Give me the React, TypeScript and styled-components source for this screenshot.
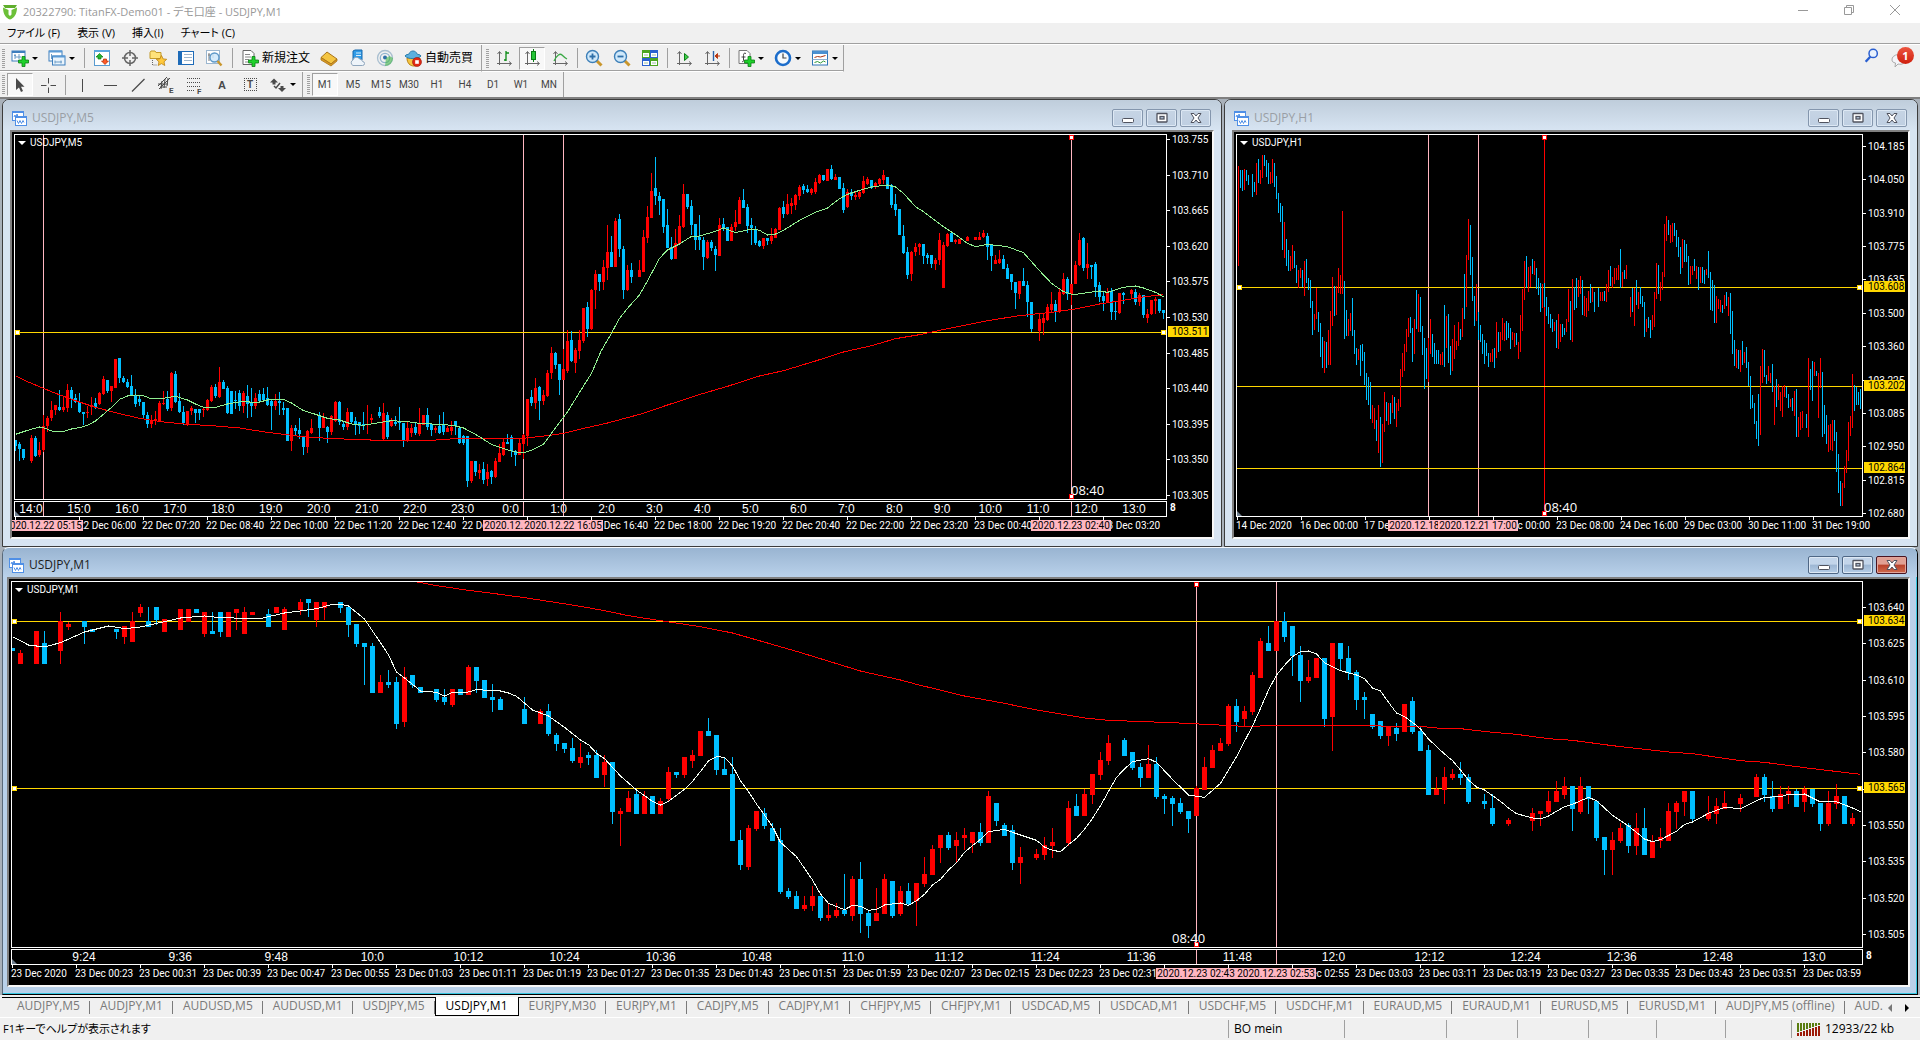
import React from "react";
import styled, { createGlobalStyle, css } from "styled-components";

/* ------------------------------------------------------------------ */
/* Tokens                                                              */
/* ------------------------------------------------------------------ */

const UI_FONT = `"Open Sans", "Noto Sans", "Noto Sans CJK JP", sans-serif`;
const AXIS_FONT = `Roboto, "Noto Sans", sans-serif`;
const UP = "#ff0000";
const DOWN = "#00bfff";
const PINK = "#ffb6c1";
const GOLD = "#ffd700";
const PLOT_STROKE = "#ffffff";

const Global = createGlobalStyle`
  *, *::before, *::after { box-sizing: border-box; }
  html, body { margin: 0; background: #f0f0f0; }
  button { font: inherit; color: inherit; margin: 0; padding: 0; border: 0; background: none; }
`;

/* ------------------------------------------------------------------ */
/* Market data. Candles: side+slot high top bottom low, in thirds of a  */
/* pixel on the price scale. Lines: slot:level.                         */
/* ------------------------------------------------------------------ */

const M1_CANDLES = `B0 323 323 333 333;R1 330 339 371 371;R3 273 273 371 371;B4 273 309 371 371;R6 216 244 333 371;R7 245 252 261 269;B9 243 243 261 311;B10 267 267 276 276;B13 267 267 276 296;R14 258 258 291 311;R15 216 243 306 306;R16 193 201 219 230;B17 201 243 261 261;B18 201 201 240 254;R19 237 237 276 276;R21 207 207 270 270;R22 207 207 246 246;B23 207 207 219 219;R24 216 216 282 290;B25 216 273 282 282;B26 216 216 276 290;R27 216 216 291 291;R28 207 207 219 270;R29 201 216 282 282;R30 216 216 225 225;B32 207 222 261 261;R33 201 201 219 219;R34 201 207 270 270;R36 178 186 210 224;B37 177 177 188 230;R38 186 186 240 260;R39 186 186 204 240;B41 186 186 204 218;B42 201 201 255 290;B43 252 252 312 320;B44 309 309 321 435;B45 309 318 459 459;R46 405 426 459 459;B47 390 426 435 444;B48 411 426 552 567;R49 381 411 546 560;B50 405 405 435 444;B51 441 441 459 459;B53 447 447 480 486;B54 447 471 486 494;R55 447 447 495 500;B56 447 447 465 465;R57 375 381 465 465;B58 381 381 423 459;B59 420 420 474 474;B60 432 471 480 516;B61 471 477 510 510;B64 471 507 552 552;R66 507 513 552 552;B67 492 513 582 587;B68 579 585 612 633;B69 609 609 627 639;B70 594 624 663 669;R71 609 651 669 684;B72 636 645 654 675;B73 630 645 714 714;R74 645 666 705 741;B75 666 666 816 852;R76 804 813 822 917;R77 753 774 816 816;B78 747 762 822 822;R79 753 768 822 822;B80 768 768 822 822;R81 774 783 822 822;R82 681 696 777 783;B83 696 696 705 713;R84 651 651 705 713;R85 630 645 663 684;R86 573 573 648 648;B87 534 573 588 588;B88 585 585 690 705;B89 651 687 705 705;B90 651 702 903 903;B91 870 900 975 990;R92 855 864 981 990;R93 813 813 867 873;B94 804 819 858 867;B95 849 864 903 903;B96 864 900 1056 1061;B97 1044 1053 1071 1077;B98 1053 1068 1107 1107;R99 1068 1095 1107 1113;R100 1038 1068 1098 1113;B101 1068 1068 1134 1142;R102 1089 1125 1134 1142;R103 1089 1110 1128 1133;B104 1002 1110 1122 1128;R105 1008 1017 1128 1142;B106 966 1017 1122 1179;B107 1110 1119 1158 1194;R108 1044 1119 1143 1143;R109 1002 1017 1122 1122;B110 1023 1023 1128 1134;R111 1038 1053 1122 1128;B112 1029 1053 1092 1097;R113 1029 1029 1083 1158;R114 951 1002 1032 1040;R115 915 927 1005 1005;R116 885 885 924 969;B117 876 885 924 930;R118 876 900 918 969;R119 864 885 894 930;R120 876 876 909 938;B121 849 876 909 917;R122 753 768 909 909;B123 789 789 843 858;B124 849 855 888 888;B125 855 870 969 990;R126 921 951 969 1032;R128 927 942 954 960;R129 891 915 945 960;R130 864 906 918 954;R132 783 804 909 917;B133 762 798 828 828;R134 747 762 828 828;R135 702 702 765 792;R136 636 660 705 720;R137 585 609 663 675;B139 594 600 648 648;B140 636 636 684 690;B141 669 681 714 741;R142 615 672 714 714;B143 651 672 771 777;B144 762 768 777 822;B145 768 774 792 858;B146 774 789 816 822;B147 813 813 837 879;R148 738 745 828 828;R149 651 681 750 750;R150 615 630 684 684;R151 594 609 633 633;R152 492 498 612 618;B153 477 498 546 576;R154 498 513 537 558;R155 396 405 516 525;R156 294 303 414 414;B157 258 309 333 333;R158 243 243 333 333;B159 216 243 291 306;B160 258 258 348 408;B161 318 345 423 486;R162 360 411 423 429;R163 354 354 414 414;B164 354 354 537 560;R165 309 309 531 633;B166 309 309 357 393;B167 318 354 399 420;B168 390 396 480 510;B169 456 471 480 537;B170 522 522 561 567;B171 543 543 588 597;R172 558 558 588 618;B173 549 564 582 602;R174 492 492 576 576;B175 471 483 576 582;B176 558 573 633 633;B177 615 630 765 765;R178 711 747 765 765;R179 681 711 750 792;R180 687 702 714 720;B181 666 702 714 735;B182 702 711 786 791;B184 762 783 792 807;B185 762 804 852 858;R187 834 840 851 858;R190 804 819 843 873;R191 813 813 822 858;R192 753 783 816 822;R193 723 753 786 786;R194 711 738 765 777;B195 738 738 807 873;R196 711 738 816 822;B197 738 738 777 822;B198 783 783 894 903;B199 891 891 930 1005;R200 876 900 930 1005;R201 849 864 903 909;B202 849 855 918 939;R203 819 864 918 945;B204 804 864 945 945;R205 885 906 954 954;R206 864 891 903 924;R207 789 813 903 903;R208 783 789 816 867;R209 753 753 786 828;B210 753 753 837 843;R212 768 819 837 843;R213 774 798 822 852;R214 753 789 807 807;R216 762 774 792 816;R218 702 711 771 771;B219 702 711 765 786;B220 723 768 807 816;R221 738 762 807 807;R222 738 753 765 792;B223 747 753 801 801;R224 738 747 786 816;B225 747 747 792 801;B226 789 789 852 873;R227 753 789 852 858;R228 732 768 792 807;B229 768 768 852 852;R230 819 834 852 858`;

const M1_FAST = `0:290 2:315 4:321 6:308 9:276 12:258 14:266 16:261 19:245 21:234 24:228 26:233 31:236 32:230 34:219 36:213 38:206 40:193 41:193 42:198 44:237 45:273 46:308 47:345 48:396 49:414 50:433 51:453 53:457 54:468 55:457 57:456 58:449 61:453 62:459 63:469 64:489 65:510 67:528 69:562 71:600 72:614 73:640 74:656 76:708 78:750 80:784 81:795 82:784 84:748 85:724 86:694 87:663 88:650 89:652 90:678 91:722 92:755 93:792 94:825 95:860 96:907 98:950 99:985 100:1020 101:1062 102:1090 104:1109 105:1096 106:1099 107:1111 108:1108 109:1095 111:1089 112:1096 113:1082 114:1063 115:1035 116:1018 117:990 118:968 119:937 120:917 121:898 122:875 124:868 125:877 127:893 128:901 129:921 130:931 131:935 132:914 133:895 134:868 135:835 136:797 138:712 139:687 140:665 142:656 143:667 145:718 147:765 149:772 151:730 153:650 155:558 156:505 157:450 158:405 159:376 160:350 161:335 162:333 163:342 164:368 166:392 168:405 169:416 170:444 171:453 172:487 173:519 174:530 175:547 176:567 177:597 179:642 180:662 181:690 182:720 183:741 184:750 186:784 187:804 188:821 190:834 191:837 192:828 194:800 195:793 197:772 198:782 200:826 202:858 203:877 204:897 205:905 206:899 208:874 209:853 210:846 212:820 214:802 216:806 218:782 219:772 221:770 222:763 224:762 226:786 228:785 230:804 231:815`;
const M1_SLOW = `50.6:126 53:137 57:151 60:160 64:173 67:184 71:199 74:212 77:227 81:242 86:260 90:279 98:334 106:393 111:420 113:433 119:468 124:490 128:510 134:534 137:541 145:548 150:554 154:559 160:556 165:558 169:556 172:559 176:559 178:564 181:566 185:577 188:583 192:596 195:601 200:617 207:636 210:641 216:662 219:667 224:683 231:703`;

const M5_EARLY = `B0 420 420 437 454;B1 426 432 447 484;B2 447 447 474 480;R4 406 414 483 489;B5 408 414 467 470;R6 426 450 465 472;R7 345 378 450 455;R8 348 354 378 395;R9 303 330 354 363;R10 315 315 330 345;B11 270 321 330 334;R12 291 321 330 336;R13 252 270 324 336;B14 261 270 297 325;B15 282 294 306 308;B16 279 306 336 338;B17 336 336 342 375;R18 318 336 340 354;R19 292 315 321 345;B20 294 309 321 327;R21 276 279 312 316;R22 228 237 282 285;B23 240 240 273 279;R24 258 258 273 306;R25 177 177 264 264;B26 174 174 234 250;B27 228 234 246 250;B28 237 246 261 264;B29 225 258 285 288;B30 267 285 312 320;B31 288 297 306 318;B32 306 306 345 357;B33 336 345 372 384;R34 345 363 372 384;R35 333 357 363 375;R36 303 309 363 363;R37 273 309 312 315;B38 273 297 327 333;R39 216 219 325 333;B40 213 222 306 310;B41 279 303 336 340;B42 318 336 369 375;R43 333 333 372 378;R44 318 324 333 345;B45 327 327 339 369;B46 327 327 339 360;R47 324 327 330 351;R48 297 300 330 333;R49 255 261 303 306;B50 252 261 288 294;R51 201 246 291 294;B52 240 246 267 268;B53 258 264 339 342;B54 273 273 342 342;B55 273 300 304 327;B56 270 279 318 333;R57 273 279 318 339;B58 255 288 312 354;B59 264 306 318 351;R60 279 294 318 327;B61 270 282 303 306;B62 264 282 300 306;B63 261 294 315 318;B64 297 303 318 390;R65 282 303 318 330;B66 276 303 309 345;B67 306 324 330 345;B68 324 324 423 423;R69 375 384 423 453;B70 375 384 392 405;B71 354 390 402 417;B72 408 408 441 465;R73 390 393 441 459;R74 357 384 399 402;B76 336 345 384 424;R77 339 351 384 384;B78 378 381 396 430;R79 345 348 396 405;R80 303 306 363 366;B81 303 306 366 375;B82 363 372 382 390;R83 324 336 381 390;B84 336 336 366 369;B85 351 363 375 405;B86 366 366 378 402;B87 336 372 378 390;R88 315 372 375 403;R89 342 355 360 372;B91 321 336 348 354;R92 309 339 417 419;B93 336 345 411 417;R94 354 363 378 381;B95 348 366 372 378;B96 321 366 369 390;B97 369 369 424 441;R98 366 384 423 426;R99 372 384 399 411;B100 366 381 399 405;R101 324 372 402 408;R102 345 345 375 375;B103 323 345 381 390;B104 372 372 390 408;R105 378 384 390 399;B106 345 378 399 403;B107 336 372 396 405;R108 378 384 396 396;R109 363 381 393 405;B110 363 363 378 405;B111 381 384 429 432;B112 405 408 430 435;B113 408 408 543 560;R114 483 483 543 549;B115 483 483 516 528;R116 492 510 519 537;B117 486 507 540 552;R118 492 516 537 558;B119 510 513 531 552;R120 474 483 531 534;R121 432 459 486 486;R122 417 426 465 468;B123 402 426 432 432;B124 405 411 453 470;B125 450 453 465 498;R126 417 429 465 465;R127 402 405 432 477;R128 297 297 408 438;B129 270 291 309 318;R130 234 264 309 327;B131 258 261 303 360;R132 270 285 303 315;R133 210 219 288 291;R134 141 159 219 237;B135 156 159 195 207;B136 192 192 240 285;R137 147 207 240 240;R138 90 123 213 218;B139 93 120 183 186;R140 144 150 189 219;R141 90 120 153 177`;

const M5_LATE = `R142 534 534 633 640;B143 515 531 597 621;R144 477 480 597 600;R145 420 432 480 537;B146 432 432 456 482;R147 390 411 456 480;R148 285 366 414 450;B149 318 366 411 411;R150 264 273 411 411;B151 252 267 357 380;B152 348 357 480 507;R153 405 420 480 483;B154 399 420 441 459;R156 390 420 441 441;R157 300 321 426 426;R158 228 261 324 339;R159 129 183 263 264;B160 81 174 198 225;B161 186 198 213 255;B162 207 207 291 309;B163 237 285 354 354;B164 321 351 387 390;R165 297 339 387 387;R166 255 288 342 345;R167 162 192 291 294;B168 192 192 231 237;B169 210 228 285 315;B170 282 282 330 360;B171 255 321 330 360;B172 321 330 381 420;R173 330 336 384 387;B174 330 336 354 363;B175 348 357 375 423;R176 264 285 378 378;B177 264 282 297 303;B178 291 291 333 333;R179 282 291 333 333;R180 240 276 291 303;R181 201 210 282 282;B182 177 210 234 234;B183 222 231 288 309;B184 264 285 294 345;B185 288 297 339 345;B186 330 333 348 351;R187 324 324 348 357;B188 324 324 333 345;R189 294 318 333 342;R190 294 297 324 324;R191 231 234 300 300;B192 213 231 252 264;R193 192 222 252 255;R194 204 219 228 252;R195 192 195 225 240;R196 165 171 198 210;B197 162 168 180 192;B198 165 177 186 189;R199 174 177 189 195;R200 144 156 186 192;R201 132 135 159 162;B202 135 135 150 153;R203 117 117 153 153;B204 105 117 147 150;R205 132 141 150 150;B206 141 141 177 177;B207 159 174 240 249;R208 177 186 231 234;B209 177 186 198 210;R210 186 195 201 210;R211 180 186 201 207;R212 138 153 189 192;R213 141 147 162 165;B214 150 150 174 177;R215 156 159 171 177;R216 144 147 162 165;R217 120 135 150 162;B218 141 141 177 177;B219 162 165 225 234;B220 192 222 240 258;B221 237 237 315 315;B222 285 318 369 372;B223 351 366 435 447;R224 363 366 432 453;R225 339 351 366 378;R226 339 342 351 375;B227 342 342 378 402;B228 369 375 384 402;B229 375 375 402 414;R230 384 390 402 420;R231 309 330 390 405;R232 336 345 474 474;R233 309 312 348 351;B234 309 309 336 336;R235 327 330 336 342;R236 327 327 342 342;R238 318 321 333 333;R240 321 322 330 330;R241 306 321 330 330;R242 300 309 321 324;B243 309 318 351 390;B244 345 345 378 423;R245 375 390 402 402;R246 360 387 399 402;B247 375 387 417 417;B248 402 414 447 447;B249 432 432 456 480;B250 456 456 489 537;R251 453 453 492 507;B252 414 453 468 468;B253 453 465 516 561;B254 516 516 597 606;R256 552 567 603 633;R257 549 564 579 615;R258 522 531 570 573;R259 486 522 540 549;B260 510 522 543 576;R261 477 486 543 549;R262 429 447 492 495;B263 441 447 492 510;R264 462 462 492 525;R265 393 405 462 462;R266 309 330 405 408;B267 321 324 414 423;R268 339 402 414 447;B269 405 405 411 447;B270 396 402 471 501;B271 456 465 501 516;B272 486 498 513 543;R273 474 486 516 519;B274 474 483 546 570;B275 516 543 546 570;R276 489 489 549 552;B277 486 489 495 522;R279 477 480 492 507;B280 477 486 516 525;R281 489 495 516 528;B282 495 495 555 564;R283 537 552 564 579;R284 510 510 552 555;R285 501 507 513 552;B286 507 507 543 549;B287 540 540 549 567`;

const M5_FAST = `0:913 3:901 6:891 7:893 9:903 12:904 14:897 16:893 18:886 20:873 22:853 24:832 26:808 28:798 30:795 32:797 34:807 37:805 40:799 43:810 45:822 47:832 50:832 53:822 56:816 58:815 60:819 63:810 67:808 69:819 72:842 75:853 78:865 81:870 84:882 87:886 90:880 94:872 98:875 101:880 104:882 107:883 110:888 112:894 115:913 119:943 122:956 125:966 127:968 129:961 132:943 134:910 137:862 138:846 141:787 144:730 146.4:663 148.5:620 151:565 153:535 156:495 158:453 161:385 163:360 166:342 169:319 171:318 175:304 177:294 180:308 184:297 186:301 188:315 190:312 192:301 196:271 200:247 203:234 206:206 208:193 211:181 214:171 218:165 220:171 222:190 225:230 227:245 232:290 235:314 238:340 240:350 243:343 248:350 252:368 254:395 256:422 259:460 262:485 264.5:494 268:488 271:483 273:487 277:472 280:468 282:474 285:487 287:500`;
const M5_SLOW = `0:737 3:755 9:785 14:808 20:832 25:848 31:865 37:876 43:883 49:887 56:894 63:907 71:919 78:925 86:929 94:932 104:931 111:925 127:925 133:917 137:910 141:898 148:879 157:850 163:825 172:790 178:769 186:738 192:722 200:693 207:666 214:647 220:626 226:614 233:596 243:572 251:557 259:547 265:537 271:522 277:511 283:499 287:494`;

/* Hourly bars, one entry per slot: side+high low, "-" is an empty slot. */
const H1_BARS = `R474 648;R213 513;B225 280;B225 288;R222 284;B225 258;B240 270;-;B237 306;B261 290;R204 300;B192 264;R225 266;R180 249;B180 213;B195 246;B204 267;R231 266;R192 264;B204 276;B243 312;B294 354;B324 381;B333 465;R381 489;B432 513;B465 528;R483 528;R450 522;B468 519;B510 564;R525 580;R519 549;B525 576;R498 603;B492 564;B549 585;B555 640;B618 720;R657 705;R579 672;B651 711;B684 786;B726 819;R738 834;B741 819;R705 810;R648 810;R546 693;B573 663;R573 660;R519 594;R540 597;R348 597;B558 732;B645 723;R672 723;R654 708;B609 723;B705 777;B759 810;R762 795;B750 843;B747 798;B771 870;B834 915;B846 930;B861 972;R930 984;R939 1002;B975 1038;R930 1074;B966 1116;R987 1104;R891 1011;B921 978;R924 990;B924 987;R900 954;B906 972;R924 996;R912 948;R822 936;R774 846;R747 828;R702 771;R669 726;B666 714;B699 801;R672 777;B585 702;R597 711;B606 711;B693 780;B729 882;B759 852;R729 862;R672 777;B717 787;B744 807;B765 807;B765 807;R777 810;R771 810;B630 816;R663 759;B657 804;B753 840;R732 828;R690 792;R738 765;R681 753;B702 735;R639 726;B537 672;R480 636;R372 495;B390 540;B486 618;B603 693;R567 678;B651 735;B690 741;B717 778;B735 807;B744 784;B774 816;R774 801;R762 801;B759 819;R681 789;B711 771;R711 768;R669 735;R684 738;B678 735;B684 729;B699 762;R711 735;R714 756;B714 750;R741 792;R660 771;R582 708;R498 615;B483 579;R516 591;R513 576;B492 537;R498 540;B519 582;B549 600;B564 651;R567 640;B564 636;B606 663;B636 687;B657 699;B672 711;R681 708;B675 759;R657 762;R687 741;B687 726;B699 720;R672 711;R582 681;B618 735;R552 741;B576 645;B549 639;R555 606;R543 597;B555 660;R603 664;R609 666;R588 648;B567 624;R579 620;B591 651;-;B579 636;R591 618;R591 618;B588 618;R567 621;R526 591;B513 573;R546 579;R519 567;R519 555;R510 555;B462 579;R531 576;B525 552;R510 552;-;R606 666;B579 651;R579 693;B555 630;R591 642;B576 627;B603 636;B621 726;R672 711;B666 699;B675 729;R660 705;R591 696;R504 612;B510 597;R561 618;R531 585;R387 546;R363 438;B375 420;R390 444;R384 441;B384 423;B405 456;B426 486;B456 537;R432 519;B435 501;B447 501;B483 570;R513 567;R513 540;B492 528;R513 552;B516 585;R516 564;B516 564;B525 567;R522 540;B468 549;B531 645;B555 648;B570 684;R603 684;R612 642;R615 651;B630 654;R600 642;B591 633;R606 663;B594 717;B648 777;B735 813;R762 819;B765 822;R765 831;B738 810;R771 804;B756 819;B801 873;B843 942;B900 939;B924 987;B978 1032;B897 1053;R813 1020;R762 864;B765 846;B840 867;R813 858;R834 864;B807 891;R873 990;B852 936;R867 915;R891 948;R873 966;R870 906;B876 909;B897 939;R912 936;B909 948;R888 963;B882 1026;R966 1026;R951 1006;R948 999;-;B957 999;R789 1026;B822 885;B798 918;R801 843;B828 843;R833 969;R789 879;B831 1026;B930 1017;B960 1047;R990 1071;R987 1065;R975 1068;B975 1038;B1011 1131;B1077 1194;B1158 1233;R1164 1233;R1113 1179;R1065 1134;R981 1098;R963 1023;R837 999;B870 948;B876 930;B891 930;B882 942`;

/* ------------------------------------------------------------------ */
/* Chart drawing                                                       */
/* ------------------------------------------------------------------ */

interface SeriesProps {
  data: string;
  pitch: number;
  body: number;
  shift: number;
}

const level = (v: number, shift: number) => Math.round(v / 3) + shift;

function Candles({ data, pitch, body, shift }: SeriesProps) {
  return (
    <>
      {data.split(";").map((row) => {
        const [head, ...rest] = row.split(" ");
        const [high, top, bottom, low] = rest.map((n) => level(Number(n), shift));
        const x = Number(head.slice(1)) * pitch;
        const fill = head[0] === "R" ? UP : DOWN;
        return (
          <g key={head} fill={fill}>
            <rect x={x} y={high} width={1} height={Math.max(1, low - high)} />
            <rect x={x - (body - 1) / 2} y={top} width={body} height={Math.max(1, bottom - top)} />
          </g>
        );
      })}
    </>
  );
}

function Bars({ data, shift }: { data: string; shift: number }) {
  return (
    <>
      {data.split(";").map((row, slot) => {
        if (row === "-") return null;
        const [high, low] = row.slice(1).split(" ").map((n) => level(Number(n), shift));
        return <rect key={slot} x={slot * 2 - 1} y={high} width={1} height={low - high} fill={row[0] === "R" ? UP : DOWN} />;
      })}
    </>
  );
}

function Average({ data, pitch, shift, color }: { data: string; pitch: number; shift: number; color: string }) {
  const points = data
    .split(" ")
    .map((p) => p.split(":").map(Number))
    .map(([s, v]) => `${s * pitch + 0.5},${v / 3 + shift}`)
    .join(" ");
  return <polyline points={points} fill="none" stroke={color} strokeWidth={1} />;
}

interface Marker {
  x: number;
  color?: string;
  label?: string;
  handles?: boolean;
}

interface PriceLine {
  y: number;
  price: string;
  handles?: boolean;
}

interface ChartSpec {
  name: string;
  width: number;
  height: number;
  axisTop: number;
  axisBottom: number;
  prices: string[];
  dates: string[];
  hours?: string[];
  hoursLead?: number;
  hoursTrail?: number;
  lines: PriceLine[];
  markers: Marker[];
  clockX: number;
  series: React.ReactNode;
}

const Body = styled.div<{ $strip: boolean }>`
  flex: 1;
  min-height: 0;
  display: grid;
  grid-template-columns: minmax(0, 1fr) 45px;
  grid-template-rows: minmax(0, 1fr) ${(p) => (p.$strip ? "17px" : "")} 20px;
  padding: 2px 0 0 2px;
  overflow: hidden;
  background: #000;
  color: #fff;
  font: 10px/11px ${AXIS_FONT};
  white-space: nowrap;
`;

const Plot = styled.div`
  grid-column: 1;
  position: relative;
  min-height: 0;
  border: 1px solid ${PLOT_STROKE};
`;

const Drawing = styled.svg`
  display: block;
  width: 100%;
  height: 100%;
  shape-rendering: crispEdges;
`;

const ChartName = styled.div`
  position: absolute;
  top: 2px;
  left: 3px;
  display: flex;
  align-items: center;
  gap: 4px;
  height: 11px;

  &::before {
    content: "";
    border: 4px solid transparent;
    border-top-color: #fff;
    border-bottom-width: 0;
  }
`;

const Clock = styled.div`
  position: absolute;
  bottom: 2px;
  font: 13px/14px ${UI_FONT};
`;

const Strip = styled.div<{ $lead: number; $count: number }>`
  grid-column: 1;
  position: relative;
  display: grid;
  grid-template-columns: repeat(${(p) => p.$count}, minmax(0, 1fr));
  margin-top: 1px;
  padding-left: ${(p) => p.$lead}px;
  border: 1px solid ${PLOT_STROKE};
`;

const Hour = styled.span<{ $trail: number }>`
  padding-right: ${(p) => p.$trail}px;
  text-align: center;
  font: 12px/14px "Liberation Sans", Arial, sans-serif;
`;

const StripMark = styled.i`
  position: absolute;
  top: 0;
  bottom: 0;
  width: 1px;
  background: ${PINK};
`;

const Corner = styled.i`
  position: absolute;
  left: 0;
  bottom: 0;
  border-top: 5px solid transparent;
  border-left: 5px solid #708090;
`;

const Dates = styled.div`
  grid-column: 1;
  position: relative;
  display: flex;
`;

const DateLabel = styled.span`
  position: relative;
  flex: none;
  padding-top: 3px;

  &::before {
    content: "";
    position: absolute;
    top: 0;
    left: 1px;
    width: 1px;
    height: 3px;
    background: #fff;
  }
`;

const DateBadge = styled.span`
  position: absolute;
  top: 3px;
  width: 80px;
  margin-left: -40px;
  text-align: center;
  color: #000;
  background: ${PINK};
`;

const Prices = styled.div<{ $top: number; $bottom: number }>`
  grid-column: 2;
  grid-row: 1 / -1;
  position: relative;
  display: flex;
  flex-direction: column;
  justify-content: space-between;
  padding: ${(p) => p.$top}px 0 ${(p) => p.$bottom}px;
`;

const Price = styled.span`
  display: flex;
  align-items: center;
  gap: 2px;

  &::before {
    content: "";
    width: 3px;
    height: 1px;
    background: #fff;
  }
`;

const PriceBadge = styled.span`
  position: absolute;
  left: 1px;
  width: 41px;
  padding-left: 4px;
  margin-top: -6px;
  color: #000;
  background: ${GOLD};
`;

const StripScale = styled.span`
  position: absolute;
  left: 3px;
  bottom: 24px;
  font-weight: 700;
`;

function Handle({ x, y, color }: { x: number; y: number; color: string }) {
  return <rect x={x + 0.5} y={y + 0.5} width={4} height={4} fill="#fff" stroke={color} strokeWidth={1} />;
}

function Chart({ spec }: { spec: ChartSpec }) {
  const { width: w, height: h } = spec;
  const axisHeight = spec.height + 2 + (spec.hours ? 17 : 0) + 20;
  return (
    <Body $strip={Boolean(spec.hours)}>
      <Plot>
        <Drawing viewBox={`0 0 ${w} ${h}`} preserveAspectRatio="none" role="img" aria-label={spec.name}>
          {spec.markers.map((m) => (
            <rect key={m.x} x={m.x} y={0} width={1} height={h} fill={m.color ?? PINK} />
          ))}
          {spec.lines.map((l) => (
            <rect key={l.y} x={0} y={l.y} width={w} height={1} fill={GOLD} />
          ))}
          {spec.series}
          {spec.lines
            .filter((l) => l.handles)
            .map((l) => (
              <g key={l.y}>
                <Handle x={0} y={l.y - 2} color={GOLD} />
                <Handle x={w - 5} y={l.y - 2} color={GOLD} />
              </g>
            ))}
          {spec.markers
            .filter((m) => m.handles)
            .map((m) => (
              <g key={m.x}>
                <Handle x={m.x - 2} y={0} color={UP} />
                <Handle x={m.x - 2} y={h - 5} color={UP} />
              </g>
            ))}
        </Drawing>
        <ChartName>{spec.name}</ChartName>
        <Clock style={{ left: `${(spec.clockX / w) * 100}%` }}>08:40</Clock>
        {!spec.hours && <Corner />}
      </Plot>
      {spec.hours && (
        <Strip $lead={spec.hoursLead ?? 0} $count={spec.hours.length}>
          {spec.hours.map((t) => (
            <Hour key={t} $trail={spec.hoursTrail ?? 0}>
              {t}
            </Hour>
          ))}
          {spec.markers.map((m) => (
            <StripMark key={m.x} style={{ left: `${(m.x / w) * 100}%` }} />
          ))}
          <Corner />
        </Strip>
      )}
      <Dates>
        {spec.dates.map((d, i) => (
          <DateLabel key={i} style={{ width: `${(64 / (w + 2)) * 100}%` }}>
            {d}
          </DateLabel>
        ))}
        {spec.markers
          .filter((m) => m.label)
          .map((m) => (
            <DateBadge key={m.x} style={{ left: `${((m.x + 1) / (w + 2)) * 100}%` }}>
              {m.label}
            </DateBadge>
          ))}
      </Dates>
      <Prices $top={spec.axisTop} $bottom={spec.axisBottom}>
        {spec.prices.map((p) => (
          <Price key={p}>{p}</Price>
        ))}
        {spec.lines.map((l) => (
          <PriceBadge key={l.price} style={{ top: `${((l.y + 1) / axisHeight) * 100}%` }}>
            {l.price}
          </PriceBadge>
        ))}
        {spec.hours && <StripScale>8</StripScale>}
      </Prices>
    </Body>
  );
}

/* ------------------------------------------------------------------ */
/* Chart definitions                                                   */
/* ------------------------------------------------------------------ */

const m5Spec: ChartSpec = {
  name: "USDJPY,M5",
  width: 1151,
  height: 364,
  axisTop: 0,
  axisBottom: 36,
  prices: ["103.755", "103.710", "103.665", "103.620", "103.575", "103.530", "103.485", "103.440", "103.395", "103.350", "103.305"],
  dates: [
    "22 Dec 2020", "22 Dec 06:00", "22 Dec 07:20", "22 Dec 08:40", "22 Dec 10:00", "22 Dec 11:20",
    "22 Dec 12:40", "22 Dec 14:00", "22 Dec 15:20", "22 Dec 16:40", "22 Dec 18:00", "22 Dec 19:20",
    "22 Dec 20:40", "22 Dec 22:00", "22 Dec 23:20", "23 Dec 00:40", "23 Dec 02:00", "23 Dec 03:20",
  ],
  hours: Array.from({ length: 24 }, (_, i) => `${(14 + i) % 24}:0`),
  hoursTrail: 16,
  lines: [{ y: 197, price: "103.511", handles: true }],
  markers: [
    { x: 28, label: "2020.12.22 05:15" },
    { x: 508, label: "2020.12.22 14:45" },
    { x: 548, label: "2020.12.22 16:05" },
    { x: 1056, label: "2020.12.23 02:40", handles: true },
  ],
  clockX: 1056,
  series: (
    <>
      <Candles data={M5_EARLY} pitch={4} body={3} shift={165} />
      <Candles data={M5_LATE} pitch={4} body={3} shift={-5} />
      <Average data={M5_SLOW} pitch={4} shift={-5} color={UP} />
      <Average data={M5_FAST} pitch={4} shift={-5} color="#90ee90" />
    </>
  ),
};

const h1Spec: ChartSpec = {
  name: "USDJPY,H1",
  width: 625,
  height: 381,
  axisTop: 7,
  axisBottom: 18,
  prices: ["104.185", "104.050", "103.910", "103.775", "103.635", "103.500", "103.360", "103.225", "103.085", "102.950", "102.815", "102.680"],
  dates: [
    "14 Dec 2020", "16 Dec 00:00", "17 Dec 08:00", "18 Dec 16:00", "22 Dec 00:00",
    "23 Dec 08:00", "24 Dec 16:00", "29 Dec 03:00", "30 Dec 11:00", "31 Dec 19:00",
  ],
  lines: [
    { y: 152, price: "103.608", handles: true },
    { y: 251, price: "103.202" },
    { y: 333, price: "102.864" },
  ],
  markers: [
    { x: 191, label: "2020.12.18 16:00" },
    { x: 241, label: "2020.12.21 17:00" },
    { x: 307, color: UP, handles: true },
  ],
  clockX: 307,
  series: <Bars data={H1_BARS} shift={-40} />,
};

const m1Dates = Array.from({ length: 29 }, (_, i) => {
  if (i === 0) return "23 Dec 2020";
  const minutes = 15 + i * 8;
  return `23 Dec 0${Math.floor(minutes / 60)}:${String(minutes % 60).padStart(2, "0")}`;
});

const m1Hours = Array.from({ length: 19 }, (_, i) => {
  const minutes = 9 * 60 + 24 + i * 12;
  return `${Math.floor(minutes / 60)}:${minutes % 60}`;
});

const m1Spec: ChartSpec = {
  name: "USDJPY,M1",
  width: 1850,
  height: 365,
  axisTop: 21,
  axisBottom: 45,
  prices: ["103.640", "103.625", "103.610", "103.595", "103.580", "103.565", "103.550", "103.535", "103.520", "103.505"],
  dates: m1Dates,
  hours: m1Hours,
  hoursLead: 24,
  lines: [
    { y: 39, price: "103.634", handles: true },
    { y: 206, price: "103.565", handles: true },
  ],
  markers: [
    { x: 1184, label: "2020.12.23 02:43", handles: true },
    { x: 1264, label: "2020.12.23 02:53" },
  ],
  clockX: 1160,
  series: (
    <>
      <Candles data={M1_CANDLES} pitch={8} body={5} shift={-42} />
      <Average data={M1_SLOW} pitch={8} shift={-42} color={UP} />
      <Average data={M1_FAST} pitch={8} shift={-42} color="#f5fff5" />
    </>
  ),
};

/* ------------------------------------------------------------------ */
/* MDI windows                                                         */
/* ------------------------------------------------------------------ */

const Workspace = styled.main`
  flex: 1;
  min-height: 0;
  display: grid;
  grid-template-columns: minmax(0, 1220fr) minmax(0, 694fr);
  grid-template-rows: repeat(2, minmax(0, 1fr));
  column-gap: 2px;
  padding: 0 2px;
  border-top: 2px solid #808080;
  background: #a9b1ba;
`;

const Window = styled.section<{ $active?: boolean }>`
  display: flex;
  flex-direction: column;
  min-width: 0;
  min-height: 0;
  border: 1px solid #3c3c3c;
  border-radius: 7px 7px 0 0;
  background: #d7e4f2;

  ${(p) =>
    p.$active &&
    css`
      grid-column: 1 / -1;
      border-color: #f4f8fc #000 #000 #5a6a7a;
      background: #b9d1ea;
      box-shadow: inset -1px -1px 0 #35c6e0;
    `}
`;

const TitleBar = styled.header<{ $active?: boolean }>`
  display: flex;
  align-items: center;
  flex: none;
  gap: 5px;
  height: ${(p) => (p.$active ? 29 : 30)}px;
  padding: ${(p) => (p.$active ? 5 : 6)}px 8px 0 ${(p) => (p.$active ? 6 : 9)}px;
  border-radius: 6px 6px 0 0;
  color: ${(p) => (p.$active ? "#1c1c1c" : "#9a9fa5")};
  background: ${(p) => (p.$active ? "linear-gradient(#99b4d1, #b9d1ea)" : "linear-gradient(#bfcddb, #d7e4f2)")};
  font: 12px/16px ${UI_FONT};
`;

const WindowName = styled.span`
  flex: 1;
`;

const Client = styled.div<{ $active?: boolean }>`
  flex: 1;
  min-height: 0;
  display: flex;
  flex-direction: column;
  margin: 0 7px 7px ${(p) => (p.$active ? 4 : 7)}px;
  border: 2px solid;
  border-color: #808080 #f8f8f8 #f8f8f8 #808080;
`;

const Caption = styled.div`
  display: flex;
  gap: 3px;
  padding-right: 2px;
`;

const CaptionButton = styled.button<{ $tone: "idle" | "active" | "close" }>`
  display: grid;
  place-items: center;
  width: 31px;
  height: 18px;
  border: 1px solid ${(p) => (p.$tone === "close" ? "#4a1420" : p.$tone === "active" ? "#4f6785" : "#8496ad")};
  border-radius: 2px;
  box-shadow: inset 0 0 0 1px ${(p) => (p.$tone === "close" ? "#e2a59b" : "#dde8f4")};
  background: ${(p) =>
    p.$tone === "close"
      ? "linear-gradient(#e0a094 45%, #b8412b 50%, #cf6b4d)"
      : p.$tone === "active"
        ? "linear-gradient(#c3d5ea 45%, #9db6d3 50%, #b5cde6)"
        : "linear-gradient(#c6d4e4, #bfcfe2)"};
`;

const ChartIcon = () => (
  <svg width="15" height="15" viewBox="0 0 15 15" aria-hidden="true">
    <rect x="0.5" y="0.5" width="11" height="9" fill="#fff" stroke="#4f8fe6" />
    <path d="M0 1.5h12" stroke="#4f8fe6" />
    <path d="M2 6l1-2 1 3 1-4 1 3" fill="none" stroke="#4f8fe6" />
    <rect x="3.5" y="5.500" width="11" height="9" fill="#fff" stroke="#4f8fe6" />
    <path d="M3 6.500h12" stroke="#4f8fe6" />
    <path d="M5 9.500l1.500 3 1.500-3 1.500 3 1.500-3 1 2" fill="none" stroke="#4f8fe6" />
  </svg>
);

const MinGlyph = () => (
  <svg width="12" height="12" viewBox="0 0 12 12" aria-hidden="true">
    <rect x="0.5" y="6.500" width="11" height="4" rx="1" fill="#fff" stroke="#50535f" />
  </svg>
);
const MaxGlyph = () => (
  <svg width="12" height="12" viewBox="0 0 12 12" aria-hidden="true">
    <rect x="1" y="1.500" width="10" height="8.500" rx="0.500" fill="#fff" stroke="#50535f" strokeWidth="1.300" />
    <rect x="4" y="4.500" width="4" height="2.500" fill="#b8cbe0" stroke="#50535f" strokeWidth="1.300" />
  </svg>
);
const CloseGlyph = () => (
  <svg width="12" height="12" viewBox="0 0 12 12" aria-hidden="true">
    <path d="M1 1.500h3l2 2.500 2-2.500h3L8 6l3 4.500H8L6 8l-2 2.500H1L4 6z" fill="#fff" stroke="#50535f" />
  </svg>
);

function ChartWindow({ spec, active }: { spec: ChartSpec; active?: boolean }) {
  const tone = active ? "active" : "idle";
  return (
    <Window $active={active} aria-label={spec.name}>
      <TitleBar $active={active}>
        <ChartIcon />
        <WindowName>{spec.name}</WindowName>
        <Caption>
          <CaptionButton $tone={tone} aria-label="Minimize">
            <MinGlyph />
          </CaptionButton>
          <CaptionButton $tone={tone} aria-label="Maximize">
            <MaxGlyph />
          </CaptionButton>
          <CaptionButton $tone={active ? "close" : "idle"} aria-label="Close">
            <CloseGlyph />
          </CaptionButton>
        </Caption>
      </TitleBar>
      <Client $active={active}>
        <Chart spec={spec} />
      </Client>
    </Window>
  );
}

/* ------------------------------------------------------------------ */
/* Title bar and menu                                                  */
/* ------------------------------------------------------------------ */

const Page = styled.div`
  display: flex;
  flex-direction: column;
  height: 100vh;
  min-height: 640px;
  background: #f0f0f0;
  color: #000;
  font: 12px/16px ${UI_FONT};
  font-feature-settings: "palt";
  white-space: nowrap;
  overflow: hidden;
`;

const AppBar = styled.header`
  display: flex;
  align-items: center;
  flex: none;
  gap: 5px;
  height: 23px;
  padding-left: 2px;
  background: #fff;
  color: #999;
  font-size: 11px;
`;

const AppName = styled.span`
  flex: 1;
`;

const SystemButton = styled.button`
  display: grid;
  place-items: center;
  width: 46px;
  height: 20px;
  margin-bottom: 3px;
`;

const SystemButtons = styled.div`
  display: flex;
  padding-right: 2px;
`;

const MenuBar = styled.nav`
  display: flex;
  flex: none;
  align-items: flex-start;
  gap: 17px;
  height: 22px;
  padding: 2px 7px 0;
  border-bottom: 1px solid #fff;
  box-shadow: inset 0 -1px 0 #a0a0a0;
  font-size: 11px;
`;

/* ------------------------------------------------------------------ */
/* Toolbars                                                            */
/* ------------------------------------------------------------------ */

const ToolRow = styled.div`
  display: flex;
  flex: none;
`;

const ToolBar = styled.div<{ $height: number; $ruled?: boolean; $lead?: number; $trail?: number }>`
  display: flex;
  align-items: center;
  height: ${(p) => p.$height}px;
  padding: 0 ${(p) => p.$trail ?? 0}px 0 ${(p) => p.$lead ?? 0}px;
  border-right: 1px solid #a0a0a0;
  ${(p) =>
    p.$ruled &&
    css`
      border-bottom: 1px solid #fff;
      box-shadow: inset 0 -1px 0 #a0a0a0;
    `}
`;

const Grip = styled.i`
  width: 3px;
  height: 19px;
  margin: 0 1px 0 2px;
  background: repeating-linear-gradient(#a0a0a0 0 1px, #f0f0f0 1px 2px);
`;

const Divider = styled.i<{ $roomy?: boolean }>`
  width: 1px;
  height: 20px;
  margin: 0 ${(p) => (p.$roomy ? 3 : 2)}px 0 ${(p) => (p.$roomy ? 4 : 3)}px;
  background: #a0a0a0;
`;

const ToolButton = styled.button<{ $pressed?: boolean; $wide?: boolean }>`
  display: flex;
  align-items: center;
  justify-content: ${(p) => (p.$wide ? "flex-start" : "center")};
  gap: 3px;
  min-width: ${(p) => (p.$wide ? 37 : 28)}px;
  height: 23px;
  padding: 0 ${(p) => (p.$wide ? 5 : 0)}px;
  ${(p) =>
    p.$pressed &&
    css`
      min-width: 26px;
      margin: 0 1px;
      border: 1px solid;
      border-color: #a0a0a0 #fff #fff #a0a0a0;
      background: #f8f8f8;
    `}
`;

const Caret = styled.i`
  border: 3px solid transparent;
  border-top-color: #000;
  border-bottom-width: 0;
`;

const Period = styled(ToolButton)`
  color: #444;
  font: 10px/12px ${AXIS_FONT};
`;

const Spacer = styled.div`
  flex: 1;
`;

const Notices = styled.div`
  display: flex;
  align-items: center;
  gap: 11px;
  height: 25px;
  padding-right: 6px;
`;

const Icon = ({ children, size = 18 }: { children: React.ReactNode; size?: number }) => (
  <svg width={size} height={size} viewBox="0 0 18 18" fill="none" aria-hidden="true">
    {children}
  </svg>
);

const Plus = () => <path d="M11 7.500h3v3.500h3.500v3H14v3.500h-3V14H7.500v-3H11z" fill="#1fd12b" stroke="#0b7d14" strokeWidth="0.800" />;
const Axes = () => (
  <>
    <path d="M4.500 3v13M2 14.500h14" stroke="#666" />
    <path d="M2.500 5l2-2.500 2 2.500M14 12.500l2.500 2-2.500 2" stroke="#666" />
  </>
);

const NewChart = () => (
  <Icon>
    <rect x="1" y="2" width="13" height="10" fill="#fff" stroke="#3d7ebd" />
    <path d="M1 3h13" stroke="#3d7ebd" strokeWidth="2" />
    <path d="M4 5v5M3 6.500h2M4 8h6M8 5v5" stroke="#6b9bc6" />
    <Plus />
  </Icon>
);
const Profiles = () => (
  <Icon>
    <rect x="1" y="2" width="13" height="10" fill="#fff" stroke="#3d7ebd" />
    <path d="M1 2.500h13" stroke="#5b9bd5" strokeWidth="2" />
    <path d="M3.500 5v5M3 8h6" stroke="#6b9bc6" />
    <rect x="4.500" y="7" width="12.500" height="9" fill="#eaf4fc" stroke="#3d7ebd" />
    <path d="M4.500 7.500h12.500" stroke="#5b9bd5" strokeWidth="2" />
    <path d="M7 13h7M7 11.500v3M13 11.500v3" stroke="#6b9bc6" />
  </Icon>
);
const MarketWatch = () => (
  <Icon>
    <rect x="1.500" y="1.500" width="15" height="15" fill="#fff" stroke="#5a9bd0" />
    <path d="M1.500 2h15" stroke="#5aa7e0" strokeWidth="2" />
    <path d="M6.500 4.500l3.500 3.500H8v2H5V8H3z" fill="#24b52d" stroke="#0b7d14" strokeWidth="0.700" />
    <path d="M12 15.500L8.500 12h2v-2h3v2h2z" fill="#ff5a28" stroke="#b32a00" strokeWidth="0.700" />
  </Icon>
);
const DataWindow = () => (
  <Icon>
    <circle cx="9" cy="9" r="5.500" stroke="#666" strokeWidth="1.500" />
    <path d="M9 1v6M9 11v6M1 9h6M11 9h6" stroke="#666" strokeWidth="1.500" />
  </Icon>
);
const Navigator = () => (
  <Icon>
    <path d="M1 3.500l1-1.500h4l1 1.500h5v6H1z" fill="#ffe27a" stroke="#c39a2a" />
    <path d="M3.500 11v5h4" stroke="#666" strokeDasharray="1 1" />
    <path d="M12.500 6.500l1.600 3.400 3.600.4-2.700 2.500.8 3.700-3.300-1.900-3.300 1.900.8-3.700-2.700-2.500 3.600-.4z" fill="#ffc93c" stroke="#b98010" strokeWidth="0.800" />
  </Icon>
);
const Terminal = () => (
  <Icon>
    <rect x="1.500" y="2.500" width="15" height="13" fill="#fff" stroke="#1e6bb8" />
    <path d="M3.500 2.500v13" stroke="#1e6bb8" strokeWidth="3" />
    <path d="M7 5.500h8M7 8.500h8M7 11.500h8" stroke="#9fb6cc" />
  </Icon>
);
const Tester = () => (
  <Icon>
    <rect x="1.500" y="1.500" width="13" height="13" fill="#fff" stroke="#9bb6cf" />
    <path d="M4 4v8M8 4v5M3 6h2" stroke="#777" />
    <circle cx="9.500" cy="8.500" r="4.500" fill="#cfe8fa" fillOpacity="0.850" stroke="#5d98c8" strokeWidth="1.400" />
    <path d="M12.500 12l4 4.500" stroke="#c9962c" strokeWidth="2.400" />
  </Icon>
);
const NewOrder = () => (
  <Icon>
    <path d="M2 1.500h8l3 3v11H2z" fill="#fff" stroke="#666" />
    <path d="M4 5.500h5M4 8h6M4 10.500h4M4 13h3" stroke="#888" />
    <Plus />
  </Icon>
);
const Editor = () => (
  <Icon>
    <path d="M1 8.500L7 3l10 7-6 5z" fill="#f4c542" stroke="#a8741a" />
    <path d="M1 8.500V11l10 6 6-5v-2l-6 5z" fill="#d99a20" stroke="#a8741a" strokeWidth="0.800" />
  </Icon>
);
const Cloud = () => (
  <Icon>
    <path d="M5 2l2-1h7v10H5z" fill="#2f9be8" stroke="#1668ad" />
    <path d="M8 4h5M8 6.500h5" stroke="#d6eefc" />
    <path d="M5 16.500a3 3 0 010-5.500 3.500 3.500 0 016.500-1 3 3 0 013 2.500 2 2 0 010 4z" fill="#eef4fa" stroke="#8fa6bd" />
  </Icon>
);
const Signals = () => (
  <Icon>
    <circle cx="9" cy="9" r="7.500" stroke="#a9bfd0" strokeWidth="1.300" />
    <circle cx="9" cy="9" r="4.700" stroke="#8fb4cf" strokeWidth="1.300" />
    <circle cx="9" cy="8.500" r="2" fill="#2e6fa8" />
    <path d="M9 17a8 8 0 008-8l-3.500-2L10 9z" fill="#43b649" fillOpacity="0.600" />
  </Icon>
);
const AutoTrade = () => (
  <Icon>
    <path d="M3 9c0 5 3 8 7 8s6-3 6-8z" fill="#f5c542" stroke="#b98010" />
    <path d="M1 7c1-2 3-1 4-2 1-4 7-4 8 0 1 1 3 0 4 2-3 3.500-13 3.500-16 0z" fill="#5bb0de" stroke="#2d7fae" />
    <circle cx="13" cy="13" r="4.500" fill="#e02a14" stroke="#9e1608" strokeWidth="0.600" />
    <rect x="11.200" y="11.200" width="3.600" height="3.600" fill="#fff" />
  </Icon>
);
const BarChart = () => (
  <Icon>
    <Axes />
    <path d="M11 2v10M9 11h2M11 4h3" stroke="#0a8a14" strokeWidth="1.300" />
  </Icon>
);
const CandleChart = () => (
  <Icon>
    <Axes />
    <path d="M10.500 0v13" stroke="#0a7d14" />
    <rect x="8.500" y="2.500" width="4" height="8" fill="#25c436" stroke="#0a7d14" />
  </Icon>
);
const LineChart = () => (
  <Icon>
    <Axes />
    <path d="M3 12c3-6 6-8 8-6s3 3 5 4" stroke="#3aa945" strokeWidth="1.300" />
  </Icon>
);
const Zoom = ({ plus }: { plus?: boolean }) => (
  <Icon>
    <path d="M11.500 11.500l5 5" stroke="#c9962c" strokeWidth="3" />
    <circle cx="7.500" cy="7.500" r="6" fill="#cfe8fa" stroke="#3c7fb8" strokeWidth="1.400" />
    <path d={plus ? "M4.500 7.500h6M7.500 4.500v6" : "M4.500 7.500h6"} stroke="#2e6fa8" strokeWidth="1.800" />
  </Icon>
);
const Tile = () => (
  <Icon>
    <path d="M1 1h8v8H1zM9 9h8v8H9z" fill="#4ba620" />
    <path d="M9 1h8v8H9zM1 9h8v8H1z" fill="#2a62cf" />
    <path d="M2 4h6v4H2zM10 4h6v4h-6zM2 12h6v4H2zM10 12h6v4h-6z" fill="#fff" />
    <path d="M3 6h4M11 6h4M3 14h4M11 14h4" stroke="#9cc2a0" />
  </Icon>
);
const AutoScroll = () => (
  <Icon>
    <Axes />
    <path d="M9.500 4.500l4 3.500-4 3.500z" fill="#3fcf4a" stroke="#0a7d14" />
  </Icon>
);
const ChartShift = () => (
  <Icon>
    <Axes />
    <path d="M10.500 2v10" stroke="#2a62a8" strokeWidth="1.400" />
    <path d="M17 7h-3M14.500 4.500L12 7l2.500 2.500z" fill="#b93a14" stroke="#b93a14" />
  </Icon>
);
const Indicators = () => (
  <Icon>
    <path d="M2 1.500h8l3 3v10H2z" fill="#fff" stroke="#777" />
    <path d="M9 4.500c-2-1-2.500 0-2.500 2v5c0 1-.5 1.500-1.500 1M4.500 8h4" stroke="#444" />
    <Plus />
  </Icon>
);
const ClockIcon = () => (
  <Icon>
    <circle cx="9" cy="9" r="7" fill="#f6fafd" stroke="#1c6dcb" strokeWidth="2.600" />
    <path d="M9 4.500V9h3.500" stroke="#444" strokeWidth="1.200" />
  </Icon>
);
const Template = () => (
  <Icon>
    <rect x="1.500" y="2" width="15" height="14" fill="#fff" stroke="#2e75b6" />
    <path d="M1.500 3.500h15" stroke="#4a90d0" strokeWidth="3" />
    <path d="M3.500 8.500l3-1 3 .5 5-1.500" stroke="#a83210" />
    <path d="M1.500 10.500h15" stroke="#8fb2d2" />
    <path d="M3.500 13.500l3-1 3 1.500 3-2 2 1" stroke="#2f9a3a" />
  </Icon>
);

const Cursor = () => (
  <Icon>
    <path d="M5 2v12l3-2.500 2 4.500 2-1-2-4.300h3.500z" fill="#4a4a4a" />
  </Icon>
);
const Cross = () => (
  <Icon>
    <path d="M9.500 2v5.500M9.500 11.500V17M2 9.500h5.500M11.500 9.500H17" stroke="#4a4a4a" />
  </Icon>
);
const VLine = () => (
  <Icon>
    <path d="M9.500 3v13" stroke="#4a4a4a" />
  </Icon>
);
const HLine = () => (
  <Icon>
    <path d="M3 9.500h13" stroke="#4a4a4a" />
  </Icon>
);
const Trend = () => (
  <Icon>
    <path d="M3 15.500L15.500 3" stroke="#4a4a4a" strokeWidth="1.200" />
  </Icon>
);
const IconLetter = styled.text`
  font: 700 8px ${AXIS_FONT};
  fill: #4a4a4a;
`;
const Channel = () => (
  <Icon>
    <path d="M1 10l9-9M2 13L13 2M5 5l-1 8M8 3L7 12M11 2l-1 8M1 8h10M3 11h7" stroke="#4a4a4a" />
    <IconLetter x="12" y="17">E</IconLetter>
  </Icon>
);
const Fibo = () => (
  <Icon>
    <path d="M2 2.500h14M2 6.500h14M2 10.500h14M2 14.500h8" stroke="#4a4a4a" strokeDasharray="1 1" />
    <IconLetter x="12" y="18">F</IconLetter>
  </Icon>
);
const TextTool = styled.b`
  color: #4a4a4a;
  font: 700 11px/14px "Liberation Sans", Arial, sans-serif;
`;
const LabelFrame = styled.b`
  width: 13px;
  height: 13px;
  border: 1px dotted #4a4a4a;
  color: #4a4a4a;
  font: 700 10px/11px "Liberation Sans", Arial, sans-serif;
`;
const Arrows = () => (
  <Icon>
    <path d="M5 2.500l4 4H6.500v2h-3v-2H1z" fill="#4a4a4a" />
    <path d="M5 10l2 2 4-5" stroke="#4a4a4a" strokeWidth="1.500" />
    <path d="M13 16l-4-4h2.500v-2h3v2H17z" fill="#4a4a4a" />
  </Icon>
);

const Search = () => (
  <Icon size={15}>
    <circle cx="11" cy="6.500" r="5" fill="#eaf2fd" stroke="#2a5fd0" strokeWidth="1.800" />
    <path d="M7.500 10.500L2 16.500" stroke="#2a5fd0" strokeWidth="2.800" />
  </Icon>
);

const Chat = styled.button`
  position: relative;
  width: 24px;
  height: 22px;
`;
const ChatCount = styled.span`
  position: absolute;
  top: 0;
  right: 0;
  width: 17px;
  height: 17px;
  border-radius: 50%;
  background: linear-gradient(#ec5540, #cf1f0c);
  color: #fff;
  font: 700 11px/17px ${UI_FONT};
`;

const PERIODS = ["M1", "M5", "M15", "M30", "H1", "H4", "D1", "W1", "MN"];

function StandardTools() {
  return (
    <ToolRow>
      <ToolBar $height={27} $ruled $trail={3}>
        <Grip />
        <ToolButton $wide aria-label="New chart"><NewChart /><Caret /></ToolButton>
        <ToolButton $wide aria-label="Profiles"><Profiles /><Caret /></ToolButton>
        <Divider $roomy />
        <ToolButton aria-label="Market watch"><MarketWatch /></ToolButton>
        <ToolButton aria-label="Data window"><DataWindow /></ToolButton>
        <ToolButton aria-label="Navigator"><Navigator /></ToolButton>
        <ToolButton aria-label="Terminal"><Terminal /></ToolButton>
        <ToolButton aria-label="Strategy tester"><Tester /></ToolButton>
        <Divider $roomy />
        <ToolButton $wide><NewOrder />新規注文</ToolButton>
        <ToolButton aria-label="Editor"><Editor /></ToolButton>
        <ToolButton aria-label="Cloud"><Cloud /></ToolButton>
        <ToolButton aria-label="Signals"><Signals /></ToolButton>
        <ToolButton $wide><AutoTrade />自動売買</ToolButton>
      </ToolBar>
      <ToolBar $height={27} $ruled $lead={2}>
        <Grip />
        <ToolButton aria-label="Bar chart"><BarChart /></ToolButton>
        <ToolButton $pressed aria-label="Candlesticks"><CandleChart /></ToolButton>
        <ToolButton aria-label="Line chart"><LineChart /></ToolButton>
        <Divider />
        <ToolButton aria-label="Zoom in"><Zoom plus /></ToolButton>
        <ToolButton aria-label="Zoom out"><Zoom /></ToolButton>
        <ToolButton aria-label="Tile windows"><Tile /></ToolButton>
        <Divider />
        <ToolButton aria-label="Auto scroll"><AutoScroll /></ToolButton>
        <ToolButton aria-label="Chart shift"><ChartShift /></ToolButton>
        <Divider />
        <ToolButton $wide aria-label="Indicators"><Indicators /><Caret /></ToolButton>
        <ToolButton $wide aria-label="Periods"><ClockIcon /><Caret /></ToolButton>
        <ToolButton $wide aria-label="Templates"><Template /><Caret /></ToolButton>
      </ToolBar>
      <Spacer />
      <Notices>
        <button aria-label="Search"><Search /></button>
        <Chat aria-label="Messages">
          <svg width="24" height="22" viewBox="0 0 24 22" aria-hidden="true">
            <path d="M2 13a7 5 0 0114-1c0 4-4 6-8 5l-3 3 .5-4C3 15.500 2 14.500 2 13z" fill="#f4f4f8" stroke="#aaa" />
          </svg>
          <ChatCount>1</ChatCount>
        </Chat>
      </Notices>
    </ToolRow>
  );
}

function LineTools() {
  return (
    <ToolRow>
      <ToolBar $height={25} $trail={1}>
        <Grip />
        <ToolButton $pressed aria-label="Cursor"><Cursor /></ToolButton>
        <ToolButton aria-label="Crosshair"><Cross /></ToolButton>
        <Divider />
        <ToolButton aria-label="Vertical line"><VLine /></ToolButton>
        <ToolButton aria-label="Horizontal line"><HLine /></ToolButton>
        <ToolButton aria-label="Trend line"><Trend /></ToolButton>
        <ToolButton aria-label="Channel"><Channel /></ToolButton>
        <ToolButton aria-label="Fibonacci"><Fibo /></ToolButton>
        <ToolButton aria-label="Text"><TextTool>A</TextTool></ToolButton>
        <ToolButton aria-label="Text label"><LabelFrame>T</LabelFrame></ToolButton>
        <ToolButton $wide aria-label="Arrows"><Arrows /><Caret /></ToolButton>
      </ToolBar>
      <ToolBar $height={25} $lead={2}>
        <Grip />
        {PERIODS.map((p) => (
          <Period key={p} $pressed={p === "M1"}>{p}</Period>
        ))}
      </ToolBar>
    </ToolRow>
  );
}

/* ------------------------------------------------------------------ */
/* Chart tabs and status bar                                           */
/* ------------------------------------------------------------------ */

const TabBar = styled.div`
  display: flex;
  flex: none;
  height: 23px;
  padding: 2px 0 0 2px;
  border-bottom: 1px solid #fff;
`;

const TabList = styled.div`
  flex: 1;
  min-width: 0;
  display: flex;
  align-items: flex-start;
  padding-left: 5px;
  border-top: 1px solid #000;
`;

const Tab = styled.button<{ $active?: boolean }>`
  position: relative;
  flex: none;
  height: 18px;
  padding: 0 10px 2px;
  color: #7a7a7a;
  line-height: 16px;

  &::after {
    content: "";
    position: absolute;
    top: 3px;
    right: 0;
    width: 1px;
    height: 13px;
    background: #7a7a7a;
  }

  ${(p) =>
    p.$active &&
    css`
      height: 19px;
      margin-top: -1px;
      padding-bottom: 1px;
      border: 1px solid #000;
      border-top: 0;
      background: #fff;
      color: #000;

      &::after {
        display: none;
      }
    `}
`;

const TabScroll = styled.div`
  display: flex;
  align-items: center;
  gap: 13px;
  width: 34px;
  padding-left: 2px;
  border-top: 1px solid #000;
`;

const ScrollButton = styled.button<{ $dir: "left" | "right" }>`
  border: 4px solid transparent;
  ${(p) =>
    p.$dir === "left"
      ? css`
          border-right-color: #777;
          border-left-width: 0;
        `
      : css`
          border-left-color: #000;
          border-right-width: 0;
        `}
`;

const TABS = [
  "AUDJPY,M5", "AUDJPY,M1", "AUDUSD,M5", "AUDUSD,M1", "USDJPY,M5", "USDJPY,M1", "EURJPY,M30", "EURJPY,M1",
  "CADJPY,M5", "CADJPY,M1", "CHFJPY,M5", "CHFJPY,M1", "USDCAD,M5", "USDCAD,M1", "USDCHF,M5", "USDCHF,M1",
  "EURAUD,M5", "EURAUD,M1", "EURUSD,M5", "EURUSD,M1", "AUDJPY,M5 (offline)",
];

const CutTab = styled(Tab)`
  &::after {
    display: none;
  }
`;

const StatusBar = styled.footer`
  display: flex;
  flex: none;
  align-items: center;
  height: 22px;
`;

const Help = styled.span`
  flex: 1;
  padding-left: 3px;
  font-size: 11px;
`;

const Cell = styled.span<{ $w: number }>`
  display: flex;
  align-items: center;
  gap: 4px;
  width: ${(p) => p.$w}px;
  height: 18px;
  padding-left: 5px;
  border-left: 1px solid #a0a0a0;
`;

const Signal = () => (
  <svg width="24" height="13" viewBox="0 0 24 13" shapeRendering="crispEdges" aria-hidden="true">
    {Array.from({ length: 8 }, (_, i) => (
      <g key={i}>
        <rect x={i * 3} y={0} width={2} height={9 - i} fill="#5a7d10" />
        <rect x={i * 3} y={10 - i} width={2} height={3 + i} fill="#9c1a08" />
      </g>
    ))}
  </svg>
);

export default function App() {
  return (
    <Page>
      <Global />
      <AppBar>
        <svg width="16" height="16" viewBox="0 0 16 16" aria-hidden="true">
          <path d="M1 1h14l-2 3H3z" fill="#5fae2c" />
          <path d="M1 3.500C1 10 4 14.500 8 15.500c4-1 7-5.500 7-12L9.500 6v4.500L8 12l-1.500-1.500V6z" fill="#6cc038" />
        </svg>
        <AppName>20322790: TitanFX-Demo01 - デモ口座 - USDJPY,M1</AppName>
        <SystemButtons>
          <SystemButton aria-label="Minimize window">
            <svg width="10" height="10" viewBox="0 0 10 10"><path d="M0 5.500h10" stroke="#999" /></svg>
          </SystemButton>
          <SystemButton aria-label="Restore window">
            <svg width="10" height="10" viewBox="0 0 10 10" fill="none"><path d="M0.500 2.500h7v7h-7zM2.500 2.500v-2h7v7h-2" stroke="#999" /></svg>
          </SystemButton>
          <SystemButton aria-label="Close window">
            <svg width="10" height="10" viewBox="0 0 10 10"><path d="M0 0l10 10M10 0L0 10" stroke="#999" /></svg>
          </SystemButton>
        </SystemButtons>
      </AppBar>
      <MenuBar>
        <button>ファイル (F)</button>
        <button>表示 (V)</button>
        <button>挿入(I)</button>
        <button>チャート (C)</button>
      </MenuBar>
      <StandardTools />
      <LineTools />
      <Workspace>
        <ChartWindow spec={m5Spec} />
        <ChartWindow spec={h1Spec} />
        <ChartWindow spec={m1Spec} active />
      </Workspace>
      <TabBar>
        <TabList role="tablist">
          {TABS.map((t) => (
            <Tab key={t} role="tab" aria-selected={t === "USDJPY,M1"} $active={t === "USDJPY,M1"}>
              {t}
            </Tab>
          ))}
          <CutTab role="tab">AUD.</CutTab>
        </TabList>
        <TabScroll>
          <ScrollButton $dir="left" aria-label="Previous tabs" />
          <ScrollButton $dir="right" aria-label="Next tabs" />
        </TabScroll>
      </TabBar>
      <StatusBar>
        <Help>F1キーでヘルプが表示されます</Help>
        <Cell $w={116}>BO mein</Cell>
        <Cell $w={102} />
        <Cell $w={71} />
        <Cell $w={71} />
        <Cell $w={68} />
        <Cell $w={69} />
        <Cell $w={66} />
        <Cell $w={129}>
          <Signal />
          12933/22 kb
        </Cell>
      </StatusBar>
    </Page>
  );
}
